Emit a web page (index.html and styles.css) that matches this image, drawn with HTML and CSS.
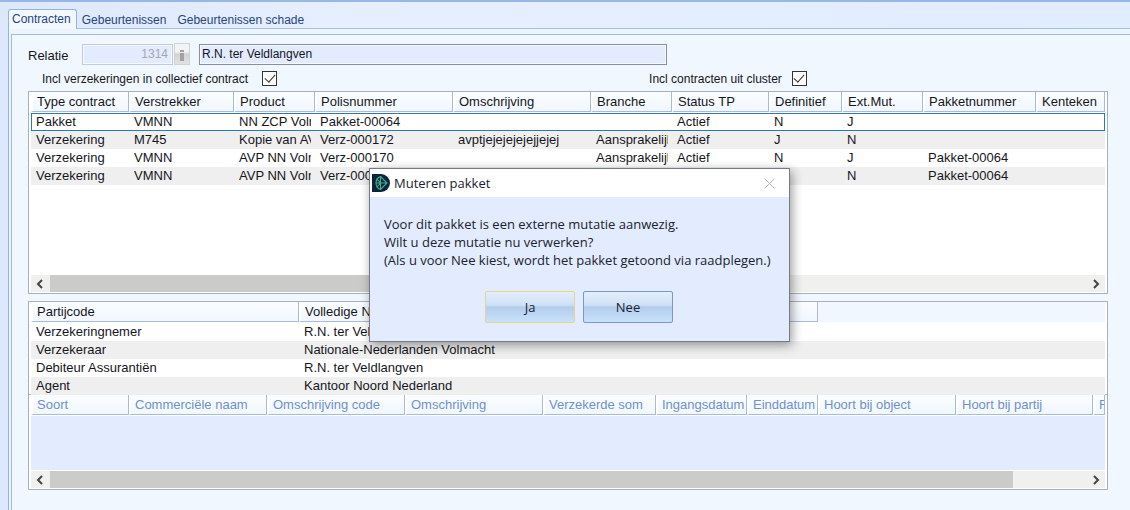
FILE: index.html
```html
<!DOCTYPE html>
<html lang="nl">
<head>
<meta charset="utf-8">
<title>Contracten</title>
<link rel="stylesheet" href="styles.css">
</head>
<body>
<main class="app">
  <nav class="tabs" role="tablist">
    <button class="tab tab-active" role="tab" aria-selected="true">Contracten</button>
    <div class="tab-rest">
      <button class="tab" role="tab" aria-selected="false">Gebeurtenissen</button>
      <button class="tab" role="tab" aria-selected="false">Gebeurtenissen schade</button>
    </div>
  </nav>
  <section class="frame">
    <div class="page">
      <div class="relation">
        <label for="relatie">Relatie</label>
        <input class="code" id="relatie" type="text" value="1314" disabled>
        <button class="info" type="button" aria-label="Informatie" disabled>
          <svg width="14" height="20" viewBox="0 0 14 20"><path d="M5 6h4v2H5zM5 9h4v8H5z" fill="#a2a2a2"/></svg>
        </button>
        <input class="name" type="text" value="R.N. ter Veldlangven" aria-label="Naam relatie" readonly>
      </div>
      <div class="options">
        <div class="option"><label for="collectief">Incl verzekeringen in collectief contract</label><input class="check" id="collectief" type="checkbox" checked></div>
        <div class="option option-tight"><label for="cluster">Incl contracten uit cluster</label><input class="check" id="cluster" type="checkbox" checked></div>
      </div>

      <div class="box">
        <div class="rows rows-contracts">
          <table class="grid">
            <colgroup><col class="w98"><col class="w105"><col class="w81"><col class="w138"><col class="w138"><col class="w81"><col class="w97"><col class="w73"><col class="w81"><col class="w113"><col></colgroup>
            <thead><tr><th>Type contract</th><th>Verstrekker</th><th>Product</th><th>Polisnummer</th><th>Omschrijving</th><th>Branche</th><th>Status TP</th><th>Definitief</th><th>Ext.Mut.</th><th>Pakketnummer</th><th>Kenteken</th></tr></thead>
            <tbody>
              <tr class="selected"><td>Pakket</td><td>VMNN</td><td>NN ZCP Volmacht</td><td>Pakket-00064</td><td></td><td></td><td>Actief</td><td>N</td><td>J</td><td></td><td></td></tr>
              <tr><td>Verzekering</td><td>M745</td><td>Kopie van AVP</td><td>Verz-000172</td><td>avptjejejejejejjejej</td><td>Aansprakelijkheid</td><td>Actief</td><td>J</td><td>N</td><td></td><td></td></tr>
              <tr><td>Verzekering</td><td>VMNN</td><td>AVP NN Volmacht</td><td>Verz-000170</td><td></td><td>Aansprakelijkheid</td><td>Actief</td><td>N</td><td>J</td><td>Pakket-00064</td><td></td></tr>
              <tr><td>Verzekering</td><td>VMNN</td><td>AVP NN Volmacht</td><td>Verz-000171</td><td></td><td></td><td></td><td></td><td>N</td><td>Pakket-00064</td><td></td></tr>
            </tbody>
          </table>
        </div>
        <div class="scroll">
          <button type="button" aria-label="Naar links"><svg width="9" height="10" viewBox="0 0 9 10"><path d="M6 1 2 5l4 4" fill="none" stroke="#444" stroke-width="2"/></svg></button>
          <div class="track"><div class="thumb thumb-short"></div></div>
          <button type="button" aria-label="Naar rechts"><svg width="9" height="10" viewBox="0 0 9 10"><path d="M3 1l4 4-4 4" fill="none" stroke="#444" stroke-width="2"/></svg></button>
        </div>
      </div>

      <div class="box">
        <div class="rows rows-parties">
          <table class="grid">
            <colgroup><col class="w268"><col class="w519"><col></colgroup>
            <thead><tr><th>Partijcode</th><th>Volledige Naam</th><th class="filler"></th></tr></thead>
            <tbody>
              <tr><td>Verzekeringnemer</td><td>R.N. ter Veldlangven</td><td></td></tr>
              <tr><td>Verzekeraar</td><td>Nationale-Nederlanden Volmacht</td><td></td></tr>
              <tr><td>Debiteur Assurantiën</td><td>R.N. ter Veldlangven</td><td></td></tr>
              <tr><td>Agent</td><td>Kantoor Noord Nederland</td><td></td></tr>
            </tbody>
          </table>
        </div>
        <div class="rows rows-cover">
          <table class="grid">
            <colgroup><col class="w98"><col class="w138"><col class="w138"><col class="w138"><col class="w113"><col class="w91"><col class="w71"><col class="w138"><col class="w137"><col></colgroup>
            <thead><tr><th>Soort</th><th>Commerciële naam</th><th>Omschrijving code</th><th>Omschrijving</th><th>Verzekerde som</th><th>Ingangsdatum</th><th>Einddatum</th><th>Hoort bij object</th><th>Hoort bij partij</th><th>R</th></tr></thead>
          </table>
          <div class="empty"></div>
        </div>
        <div class="scroll">
          <button type="button" aria-label="Naar links"><svg width="9" height="10" viewBox="0 0 9 10"><path d="M6 1 2 5l4 4" fill="none" stroke="#444" stroke-width="2"/></svg></button>
          <div class="track"><div class="thumb thumb-long"></div></div>
          <button type="button" aria-label="Naar rechts"><svg width="9" height="10" viewBox="0 0 9 10"><path d="M3 1l4 4-4 4" fill="none" stroke="#444" stroke-width="2"/></svg></button>
        </div>
      </div>
    </div>
  </section>
</main>

<div class="dialog" role="dialog" aria-labelledby="dialog-title">
  <header class="dialog-bar">
    <svg width="18" height="18" viewBox="0 0 18 18"><path d="M0 0h9a9 9 0 0 1 0 18H0z" fill="#0b2437"/><path d="M8.500 2.500C5.500 3.500 4 6 4 9s1.500 5.500 4.500 6.500zM8.500 2.500 15 9l-6.500 6.500M4.500 9H15M5 5l3.500 4L5 13" fill="none" stroke="#3fae96" stroke-width="1.100"/></svg>
    <h1 id="dialog-title">Muteren pakket</h1>
    <button class="close" type="button" aria-label="Sluiten"><svg width="11" height="11" viewBox="0 0 11 11"><path d="M.5.5l10 10M10.500.5l-10 10" stroke="#bcb6b6" fill="none"/></svg></button>
  </header>
  <div class="dialog-body">
    <p>Voor dit pakket is een externe mutatie aanwezig.<br>Wilt u deze mutatie nu verwerken?<br>(Als u voor Nee kiest, wordt het pakket getoond via raadplegen.)</p>
    <div class="actions">
      <button class="action action-default" type="button">Ja</button>
      <button class="action" type="button">Nee</button>
    </div>
  </div>
</div>
</body>
</html>
```

FILE: styles.css
```css
* { box-sizing: border-box; }
body {
  margin: 0;
  font: 13px/18px "Liberation Sans", Arial, sans-serif;
  color: #15161c;
  overflow: hidden;
}
button, input { font: inherit; margin: 0; }
svg { display: block; }

.app {
  display: flex;
  flex-direction: column;
  min-height: 100vh;
  padding: 7px 0 0 8px;
  border-top: 2px solid #98b7e8;
  background: linear-gradient(90deg, #dde8fc, #e6effe 30%, #e0edff);
}

/* Tabs */
.tabs { display: flex; font-size: 12px; }
.tab { border: 0; padding: 0 6px 0 5px; background: none; color: #27447f; }
.tab-active {
  height: 20px;
  padding: 0 5px 2px 3px;
  border: 1px solid #94b4e0;
  border-bottom: 0;
  border-radius: 3px 3px 0 0;
  background: #f3f8ff;
}
.tab-rest { flex: 1; display: flex; height: 20px; border-bottom: 1px solid #a3bfe6; padding-top: 2px; }

.frame {
  flex: 1;
  display: flex;
  padding: 5px 0 0 2px;
  border-left: 1px solid #94b4e0;
  background: #ecf5ff;
}
.page {
  flex: 1;
  min-width: 0;
  padding: 8px 22px 18px 16px;
  border: solid #a0bce0;
  border-width: 1px 0 0 1px;
  background: #f1f7ff;
}

/* Form */
.relation { display: flex; align-items: center; height: 22px; }
.relation label { width: 54px; padding-top: 4px; }
.code, .name { height: 21px; border: 1px solid #8b8f99; background: #e2ebff; color: #15161c; font-size: 12px; padding: 0 2px; box-shadow: inset 0 0 0 1px #f5f8ff; }
.code { width: 91px; padding-right: 4px; text-align: right; border-color: #c3cad8; color: #a5a8b2; }
.info { width: 16px; height: 22px; padding: 0; margin: 0 9px 0 1px; border: 1px solid #d2d2d2; background: linear-gradient(#f3f3f3 40%, #d3d3d3 50%, #e2e2e2); }
.name { width: 468px; }
.options { display: flex; gap: 372px; padding: 5px 0 4px 14px; font-size: 12px; }
.option { display: flex; align-items: center; gap: 14px; height: 17px; }
.option-tight { gap: 10px; }
.check { appearance: none; display: flex; justify-content: center; width: 15px; height: 15px; border: 1px solid #333; background: #fff; }
.check:checked::after { content: ""; width: 5px; height: 9px; border: solid #333; border-width: 0 1px 1px 0; transform: rotate(42deg); }

/* Grids */
.box { border: 1px solid #a9b0bd; background: #fff; padding-bottom: 1px; }
.box + .box { margin-top: 7px; }
.rows { padding: 0 2px; }
.rows-contracts { height: 183px; }
.rows-parties { height: 93px; border-bottom: 1px solid #c6c9cc; }
.rows-cover { height: 76px; }
.grid { width: 100%; table-layout: fixed; border-collapse: separate; border-spacing: 0; }
.grid th, .grid td { overflow: hidden; white-space: nowrap; text-align: left; font-weight: normal; }
.grid th {
  height: 20px;
  padding: 0 0 0 4px;
  border: solid #a9bcd6;
  border-width: 0 1px 1px 2px;
  border-left-color: #fff;
  background: linear-gradient(#fbfdff, #f1f7ff);
}
.grid .filler { border: 0; background: #f1f7ff; }
.grid tbody::before { content: ""; display: block; height: 1px; }
.grid td { height: 18px; padding: 0 0 0 5px; border-right: 4px solid transparent; }
.grid tbody tr:nth-child(even) td { background: #f0efef; }
.grid .selected { outline: 1px solid #2c78b8; outline-offset: -1px; }
.rows-cover .grid th { color: #7090cb; }
.empty { height: 54px; margin-top: 1px; background: #e2ebff; }

.w71 { width: 71px; } .w73 { width: 73px; } .w81 { width: 81px; } .w91 { width: 91px; }
.w97 { width: 97px; } .w98 { width: 98px; } .w105 { width: 105px; } .w113 { width: 113px; }
.w137 { width: 137px; } .w138 { width: 138px; } .w268 { width: 268px; } .w519 { width: 519px; }

.scroll { display: flex; height: 17px; margin: 0 2px; background: #f0f0ef; }
.scroll button { display: flex; align-items: center; justify-content: center; width: 19px; border: 0; padding: 0; background: none; }
.track { flex: 1; display: flex; }
.thumb { background: #cbcbca; }
.thumb-short { width: 60%; }
.thumb-long { width: 93%; }

/* Dialog */
.dialog {
  position: absolute;
  left: 369px;
  top: 168px;
  width: 421px;
  border: 1px solid #747a88;
  background: #e2ecfe;
  box-shadow: 2px 3px 10px rgba(0, 0, 0, .4);
  font: 13px/18px "Open Sans", "Noto Sans", sans-serif;
  color: #1b2130;
}
.dialog-bar { display: flex; align-items: center; height: 28px; padding: 0 14px 0 2px; background: #fff; }
.dialog-bar h1 { flex: 1; margin: 0 0 0 4px; font: inherit; }
.close { border: 0; padding: 0; background: none; }
.dialog-body { padding: 18px 14px; }
.dialog p { margin: 0; white-space: nowrap; }
.actions { display: flex; gap: 8px; padding: 22px 0 0 101px; }
.action {
  width: 90px;
  height: 32px;
  padding: 0;
  border: 1px solid #7d97c4;
  border-radius: 2px;
  background: linear-gradient(#e3eefb, #cfe0f5 44%, #b2cdec 50%, #c9e2fb);
  color: inherit;
}
.action-default { border-color: #e5d490; }
```
